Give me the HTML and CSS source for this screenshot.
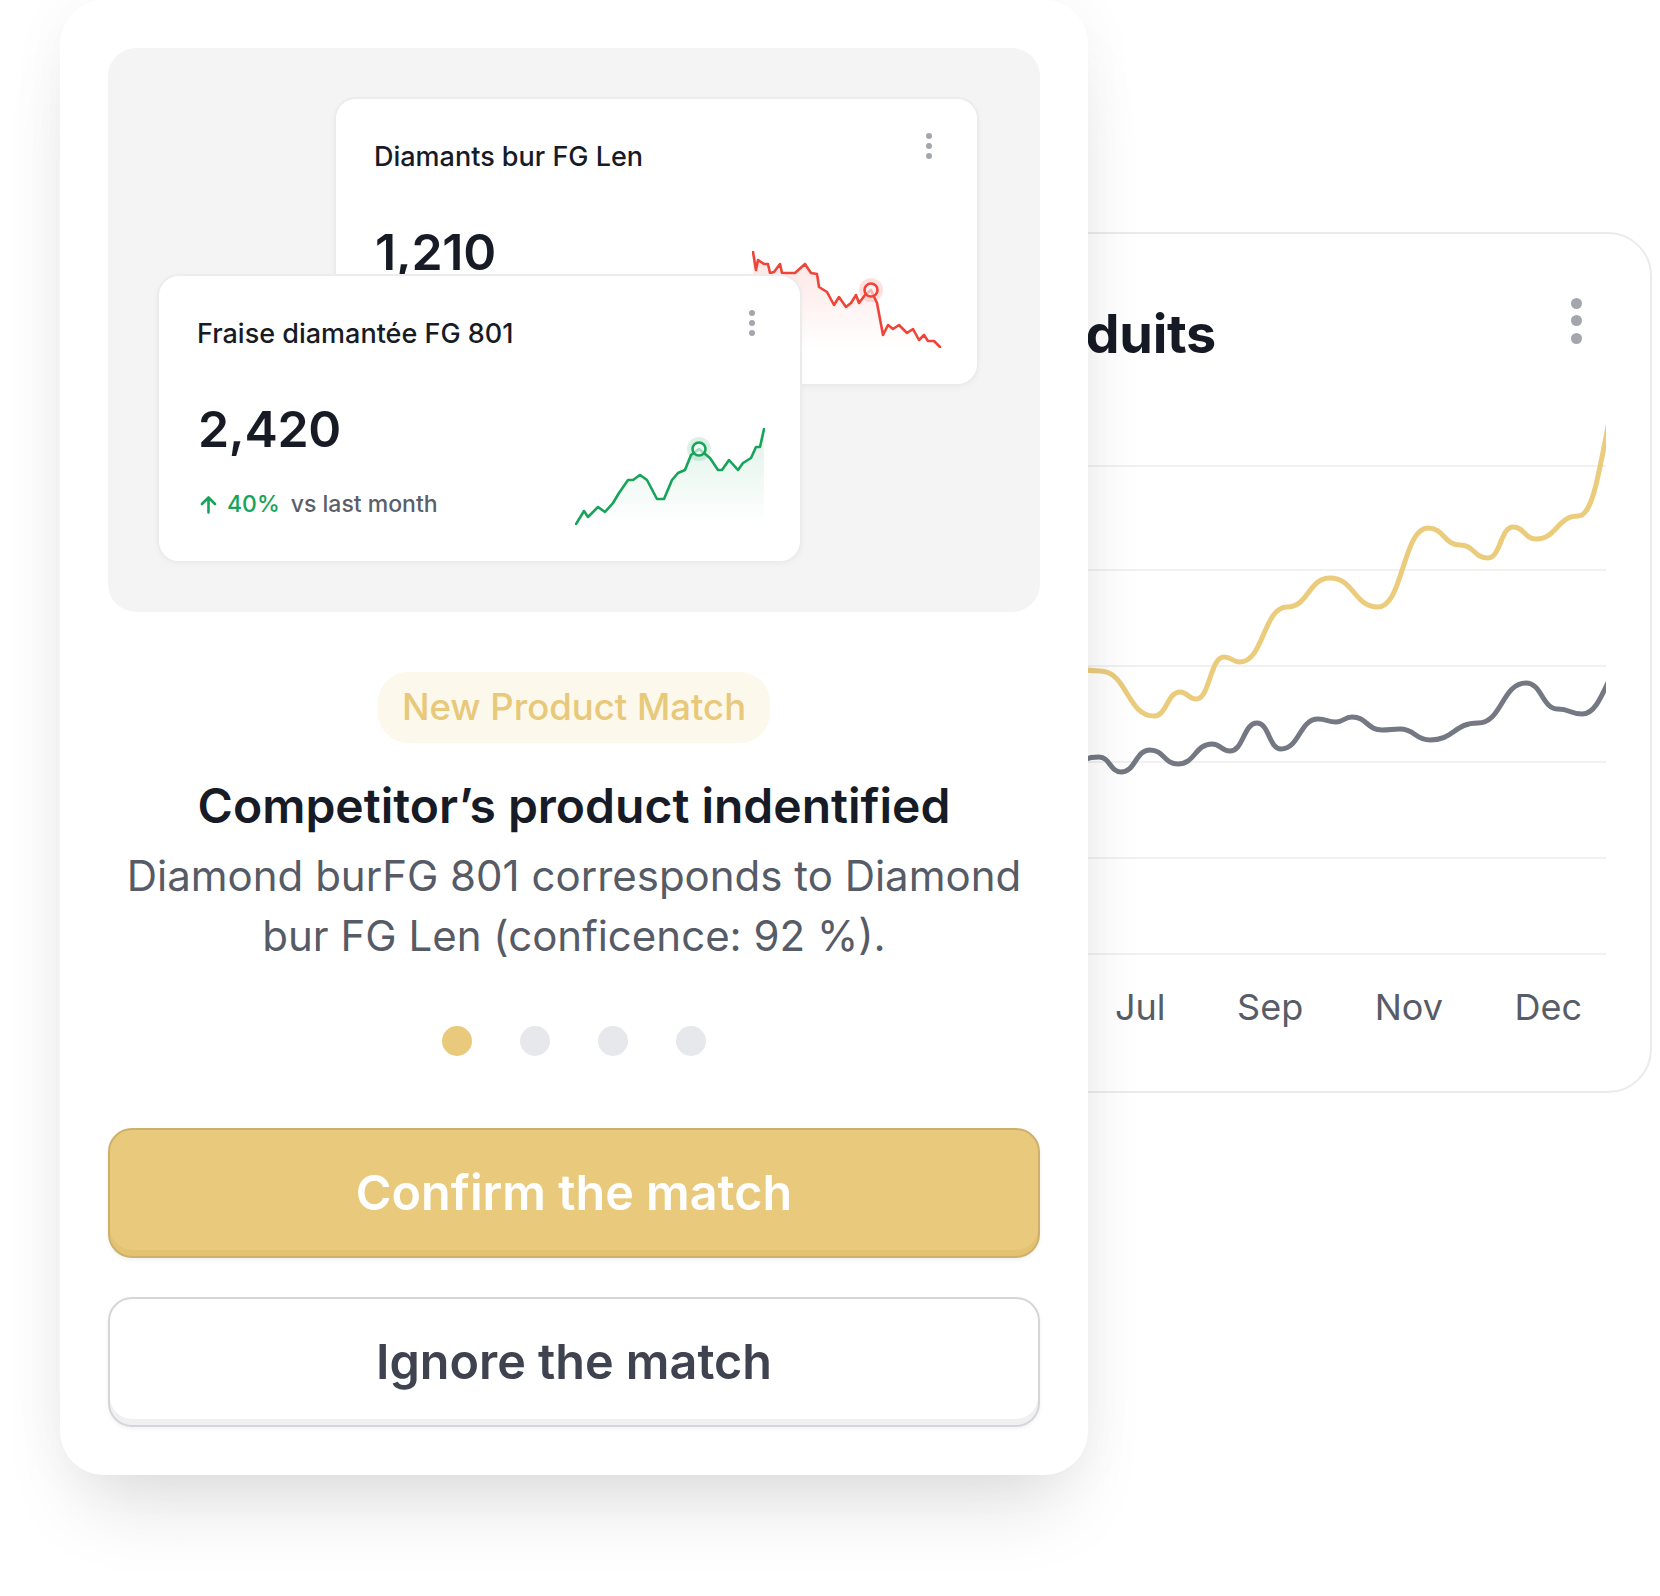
FILE: index.html
```html
<!DOCTYPE html>
<html lang="fr">
<head>
<meta charset="utf-8">
<title>Product match</title>
<link rel="stylesheet" href="styles.css">
</head>
<body>
<div class="stage">
  <section class="chart-card">
    <header class="chart-head">
      <h2 class="chart-title">Ventes des produits</h2>
      <span class="kebab kebab-lg"><i></i><i></i><i></i></span>
    </header>
    <svg class="chart" width="1004" height="560" viewBox="602 420 1004 560">
      <g stroke="#f1f1f2" stroke-width="2">
        <line x1="602" y1="466" x2="1606" y2="466"/>
        <line x1="602" y1="570" x2="1606" y2="570"/>
        <line x1="602" y1="666" x2="1606" y2="666"/>
        <line x1="602" y1="762" x2="1606" y2="762"/>
        <line x1="602" y1="858" x2="1606" y2="858"/>
        <line x1="602" y1="954" x2="1606" y2="954"/>
      </g>
      <path fill="none" stroke="#ebcc7c" stroke-width="5" stroke-linecap="round" stroke-linejoin="round"
        d="M1040,662 C1070,662 1070,671 1100,671 C1127,671 1127,716 1154,716 C1167,716 1167,692 1180,692 C1188,692 1188,699 1196,699 C1210,699 1210,657 1224,657 C1232,657 1232,662 1240,662 C1263.5,662 1263.5,607 1287,607 C1308.5,607 1308.5,578 1330,578 C1354,578 1354,607 1378,607 C1403,607 1403,528 1428,528 C1444,528 1444,545 1460,545 C1474,545 1474,558 1488,558 C1500.5,558 1500.5,527 1513,527 C1524.5,527 1524.5,539 1536,539 C1557,539 1557,516 1578,516 C1592,516 1598,480 1612,405"/>
      <path fill="none" stroke="#737883" stroke-width="5" stroke-linecap="round" stroke-linejoin="round"
        d="M1050,772 C1074.5,772 1074.5,757 1099,757 C1110,757 1110,772 1121,772 C1135.5,772 1135.5,750 1150,750 C1164,750 1164,764 1178,764 C1195,764 1195,744 1212,744 C1221,744 1221,751 1230,751 C1243.5,751 1243.5,723 1257,723 C1269,723 1269,749 1281,749 C1299.5,749 1299.5,719 1318,719 C1327,719 1327,722 1336,722 C1344,722 1344,717 1352,717 C1367,717 1367,730 1382,730 C1391,730 1391,729 1400,729 C1415,729 1415,740 1430,740 C1454,740 1454,723 1478,723 C1502,723 1502,683 1526,683 C1542,683 1542,709 1558,709 C1570,709 1570,714 1582,714 C1594,714 1600,700 1612,674"/>
    </svg>
    <div class="months"><span>Jan</span><span>Mar</span><span>May</span><span>Jul</span><span>Sep</span><span>Nov</span><span>Dec</span></div>
  </section>

  <main class="match-card">
    <div class="preview">
      <article class="stat stat-back">
        <h3 class="stat-name">Diamants bur FG Len</h3>
        <span class="kebab"><i></i><i></i><i></i></span>
        <div class="stat-value">1,210</div>
        <div class="stat-delta" aria-hidden="true"></div>
        <svg class="spark" width="190" height="97" viewBox="752 251 190 97">
          <defs>
            <linearGradient id="redfill" gradientUnits="userSpaceOnUse" x1="0" y1="260" x2="0" y2="348">
              <stop offset="0" stop-color="#f04438" stop-opacity="0.13"/>
              <stop offset="1" stop-color="#f04438" stop-opacity="0"/>
            </linearGradient>
          </defs>
          <polygon fill="url(#redfill)" points="753,252 756,270 758,260 764,264 768,264 770,273 774,272 780,264 782,273 795,273 805,264 811,273 817,274 819,287 827,292 834,305 839,297 846,307 851,303 856,295 859,303 865,295 871,290 877,303 883,335 888,325 893,329 899,325 903,329 907,333 913,329 919,340 924,335 928,341 934,341 940,347 940,348 753,348"/>
          <polyline fill="none" stroke="#f04438" stroke-width="2.6" stroke-linejoin="round" stroke-linecap="round" points="753,252 756,270 758,260 764,264 768,264 770,273 774,272 780,264 782,273 795,273 805,264 811,273 817,274 819,287 827,292 834,305 839,297 846,307 851,303 856,295 859,303 865,295 871,290 877,303 883,335 888,325 893,329 899,325 903,329 907,333 913,329 919,340 924,335 928,341 934,341 940,347"/>
          <circle cx="871" cy="290" r="12" fill="#f04438" fill-opacity="0.16"/>
          <circle cx="871" cy="290" r="6.5" fill="#fff" fill-opacity="0.6" stroke="#f04438" stroke-width="2.6"/>
        </svg>
      </article>

      <article class="stat stat-front">
        <h3 class="stat-name">Fraise diamantée FG 801</h3>
        <span class="kebab"><i></i><i></i><i></i></span>
        <div class="stat-value">2,420</div>
        <div class="stat-delta">
          <svg class="arrow" width="19" height="19" viewBox="0 0 19 19"><path d="M9.5 17.5V2.5M3 9l6.5-6.5L16 9" fill="none" stroke="#17a35a" stroke-width="2.6" stroke-linecap="round" stroke-linejoin="round"/></svg>
          <span class="pct">40%</span><span class="vs">vs last month</span>
        </div>
        <svg class="spark" width="190" height="97" viewBox="575 428 190 97">
          <defs>
            <linearGradient id="greenfill" gradientUnits="userSpaceOnUse" x1="0" y1="440" x2="0" y2="525">
              <stop offset="0" stop-color="#17a35a" stop-opacity="0.12"/>
              <stop offset="1" stop-color="#17a35a" stop-opacity="0"/>
            </linearGradient>
          </defs>
          <polygon fill="url(#greenfill)" points="575,525 584,511 588,517 598,507 605,512 613,503 619,493 628,480 633,480 640,475 647,480 657,499 664,499 672,480 678,473 685,470 691,455 699,449 710,458 718,470 722,470 729,460 738,470 743,463 751,458 756,447 760,447 764,429 764,525"/>
          <polyline fill="none" stroke="#17a35a" stroke-width="2.6" stroke-linejoin="round" stroke-linecap="round" points="576,524 584,511 588,517 598,507 605,512 613,503 619,493 628,480 633,480 640,475 647,480 657,499 664,499 672,480 678,473 685,470 691,455 699,449 710,458 718,470 722,470 729,460 738,470 743,463 751,458 756,447 760,447 764,429"/>
          <circle cx="699" cy="449" r="12" fill="#17a35a" fill-opacity="0.15"/>
          <circle cx="699" cy="449" r="6.5" fill="#fff" fill-opacity="0.6" stroke="#17a35a" stroke-width="2.6"/>
        </svg>
      </article>
    </div>

    <span class="badge">New Product Match</span>
    <h1 class="title">Competitor’s product indentified</h1>
    <p class="desc">Diamond burFG 801 corresponds to Diamond<br>bur FG Len (conficence: 92 %).</p>
    <div class="dots"><i class="on"></i><i></i><i></i><i></i></div>
    <button class="btn btn-primary" type="button">Confirm the match</button>
    <button class="btn btn-secondary" type="button">Ignore the match</button>
  </main>
</div>
</body>
</html>
```

FILE: styles.css
```css
* { box-sizing: border-box; }
html, body { margin: 0; background: #ffffff; }
body {
  font-family: Inter, "Noto Sans", "Liberation Sans", sans-serif;
  color: #171b26;
}
.stage {
  position: relative;
  width: 1660px;
  height: 1596px;
  overflow: hidden;
}

/* ---------- background chart card ---------- */
.chart-card {
  position: absolute;
  left: 600px;
  top: 232px;
  width: 1052px;
  height: 861px;
  border: 2px solid #ebebeb;
  border-radius: 44px;
  background: #fff;
  padding: 68px 44px 0 0;
  z-index: 0;
}
.chart-head {
  display: flex;
  justify-content: flex-end;
  align-items: flex-start;
  height: 64px;
  padding-right: 24px;
}
.chart-title {
  margin: 0 355px 0 0;
  font-size: 54px;
  font-weight: 700;
  line-height: 64px;
  white-space: nowrap;
  letter-spacing: -0.3px;
  color: #161a24;
}
.chart { display: block; margin-top: 54px; }
.months {
  display: flex;
  justify-content: flex-end;
  gap: 71.5px;
  padding-right: 24px;
  margin-top: 5px;
  font-size: 36px;
  line-height: 44px;
  color: #575c66;
}

/* ---------- kebab ---------- */
.kebab {
  display: flex;
  flex-direction: column;
  gap: 4px;
}
.kebab i {
  display: block;
  width: 6px;
  height: 6px;
  border-radius: 50%;
  background: #a4a6ad;
}
.kebab-lg { gap: 6.5px; margin-top: -4.5px; }
.kebab-lg i { width: 11px; height: 11px; }

/* ---------- main card ---------- */
.match-card {
  position: relative;
  z-index: 1;
  margin-left: 60px;
  width: 1028px;
  padding: 48px;
  background: #fff;
  border-radius: 44px;
  box-shadow: 0 50px 80px -24px rgba(0, 0, 0, 0.13), 0 0 60px rgba(0, 0, 0, 0.045);
  display: flex;
  flex-direction: column;
  align-items: center;
}

.preview {
  width: 100%;
  height: 564px;
  background: #f4f4f4;
  border-radius: 28px;
  display: grid;
}
.stat {
  grid-area: 1 / 1;
  align-self: start;
  justify-self: start;
  width: 645px;
  height: 289px;
  border: 2px solid #ececec;
  border-radius: 22px;
  background: #fff;
  padding: 42px 35px 0 38px;
  display: grid;
  grid-template-columns: 1fr 190px;
  grid-template-rows: auto auto auto;
  align-content: start;
  box-shadow: 0 2px 6px rgba(0, 0, 0, 0.03);
}
.stat-back { margin: 49px 0 0 226px; }
.stat-front { margin: 226px 0 0 49px; }

.stat-name {
  grid-column: 1;
  grid-row: 1;
  margin: 0;
  font-size: 27px;
  font-weight: 500;
  line-height: 32px;
  white-space: nowrap;
}
.stat .kebab {
  grid-column: 2;
  grid-row: 1;
  justify-self: end;
  margin: -8px 10px 0 0;
}
.stat-value {
  grid-column: 1;
  grid-row: 2;
  margin-top: 49px;
  margin-left: 1px;
  font-size: 50px;
  font-weight: 600;
  line-height: 60px;
  letter-spacing: -0.3px;
}
.stat-delta {
  grid-column: 1;
  grid-row: 3;
  margin-top: 31px;
  margin-left: 2px;
  height: 28px;
  display: flex;
  align-items: center;
  font-size: 23px;
  line-height: 28px;
}
.arrow { display: block; margin-right: 9px; }
.pct { color: #17a35a; font-weight: 500; margin-right: 11px; }
.vs { color: #5a5f6a; font-weight: 500; }
.spark {
  grid-column: 2;
  grid-row: 2 / 4;
  align-self: end;
  display: block;
  margin-bottom: -7px;
}

.badge {
  margin-top: 60px;
  height: 71px;
  padding: 0 24px;
  border-radius: 30px;
  background: #fcf8ec;
  color: #e8c879;
  font-size: 36.5px;
  font-weight: 500;
  line-height: 71px;
}
.title {
  margin: 35px 0 0;
  font-size: 48px;
  font-weight: 600;
  line-height: 56px;
  text-align: center;
  color: #171b26;
}
.desc {
  margin: 12px 0 0;
  font-size: 42px;
  line-height: 60px;
  color: #565b66;
  text-align: center;
  white-space: nowrap;
}
.dots {
  margin-top: 60px;
  display: flex;
  gap: 48px;
}
.dots i {
  display: block;
  width: 30px;
  height: 30px;
  border-radius: 50%;
  background: #e7e8eb;
}
.dots i.on { background: #e9c97b; }

.btn {
  display: block;
  width: 100%;
  height: 130px;
  border-radius: 24px;
  font-family: inherit;
  font-size: 48.5px;
  font-weight: 600;
  line-height: 1;
  cursor: pointer;
}
.btn-primary {
  margin-top: 72px;
  background: #e9ca7c;
  border: 2px solid #cdb06b;
  color: #ffffff;
  box-shadow: inset 0 -6px 0 rgba(190, 150, 60, 0.14), 0 2px 4px rgba(0, 0, 0, 0.06);
}
.btn-secondary {
  margin-top: 39px;
  background: #ffffff;
  border: 2px solid #d6d6da;
  color: #3f4350;
  box-shadow: inset 0 -6px 0 #f0f0f2, 0 2px 4px rgba(0, 0, 0, 0.05);
}
```
